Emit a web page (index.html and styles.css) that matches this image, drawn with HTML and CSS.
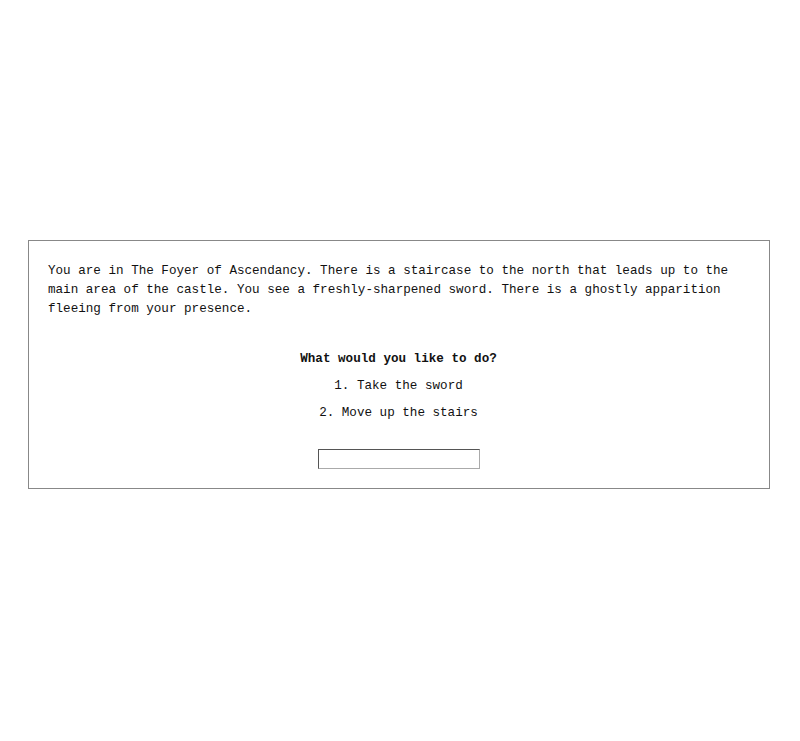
FILE: index.html
```html
<!DOCTYPE html>
<html lang="en">
<head>
<meta charset="utf-8">
<title>The Foyer of Ascendancy</title>
<link rel="stylesheet" href="styles.css">
</head>
<body>
<main class="stage">
  <section class="game">
    <p class="desc">You are in The Foyer of Ascendancy. There is a staircase to the north that leads up to the main area of the castle. You see a freshly-sharpened sword. There is a ghostly apparition fleeing from your presence.</p>
    <h2 class="prompt">What would you like to do?</h2>
    <ol class="choices">
      <li>Take the sword</li>
      <li>Move up the stairs</li>
    </ol>
    <div class="entry"><input class="command" type="text" aria-label="Your choice"></div>
  </section>
</main>
</body>
</html>
```
FILE: styles.css
```css
html, body {
  margin: 0;
  padding: 0;
  background: #fff;
}
body {
  font-family: "Liberation Mono", "Courier New", monospace;
  font-size: 12.6px;
  line-height: 19px;
  color: #111;
}
.stage {
  padding-top: 240px;
}
.game {
  margin: 0 30px 0 28px;
  border: 1px solid #888;
  padding: 21px 20px 19px 19px;
  display: flex;
  flex-direction: column;
}
.desc {
  margin: 0;
}
.prompt {
  margin: 31px 0 0;
  font-size: 12.6px;
  line-height: 19px;
  font-weight: bold;
  text-align: center;
}
.choices {
  margin: 7.5px 0 0;
  padding: 0;
  list-style-position: inside;
  text-align: center;
  display: flex;
  flex-direction: column;
  gap: 8px;
}
.entry {
  margin-top: 26.5px;
  display: flex;
  justify-content: center;
}
.command {
  box-sizing: border-box;
  width: 162px;
  height: 20px;
  margin: 0 0 0 1px;
  padding: 0 3px;
  border: 1px solid #aaa;
  border-top-color: #555;
  border-left-color: #555;
  border-radius: 0;
  background: #fff;
  font-family: inherit;
  font-size: 12px;
}
```
